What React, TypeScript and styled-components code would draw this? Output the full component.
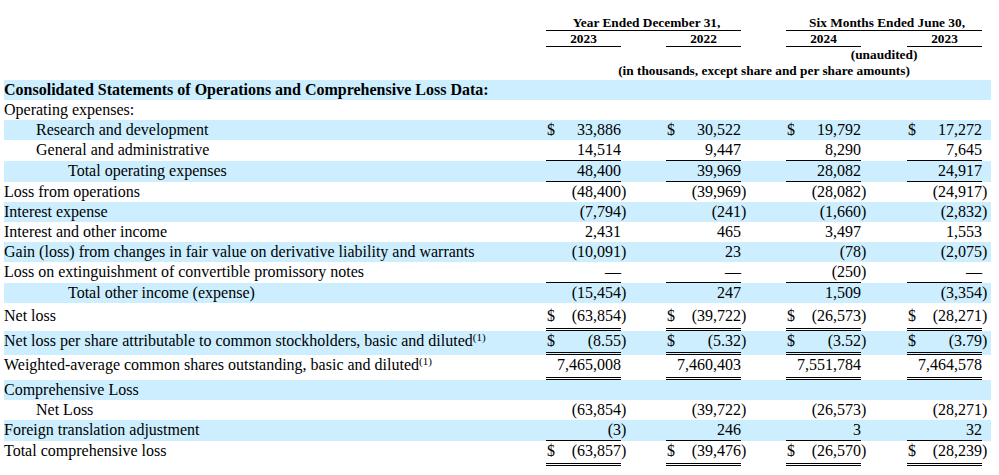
import React from 'react';
import styled, { createGlobalStyle } from 'styled-components';

const GlobalStyle = createGlobalStyle`
  html, body { margin: 0; padding: 0; background: #ffffff; }
  body { font-family: "Liberation Serif", "Times New Roman", serif; color: #000000; }
`;

const Page = styled.div`
  padding: 15px 0 0 4px;
`;

const Table = styled.table`
  border-collapse: separate;
  border-spacing: 0;
  table-layout: fixed;
  width: 987px;
  font-family: "Liberation Serif", "Times New Roman", serif;
  color: #000;
`;

const Col = styled.col<{ $w: number }>`
  width: ${(p) => p.$w}px;
`;

const HeadCell = styled.td<{ $rule?: boolean; $shift?: boolean; $lh?: number; $pb?: number }>`
  font-size: 13.33px;
  font-weight: bold;
  line-height: ${(p) => p.$lh ?? 15}px;
  text-align: center;
  white-space: nowrap;
  vertical-align: top;
  padding: 0 0 ${(p) => p.$pb ?? 0}px ${(p) => (p.$shift ? 6 : 0)}px;
  border-bottom: ${(p) => (p.$rule ? '1px solid #000' : 'none')};
`;

const BodyRow = styled.tr<{ $shaded: boolean }>`
  background: ${(p) => (p.$shaded ? '#cceeff' : 'transparent')};
`;

type Rule = 'single' | 'double' | undefined;

const Cell = styled.td<{ $pt: number; $pb: number; $rule?: Rule }>`
  font-size: 16px;
  line-height: 20px;
  vertical-align: top;
  white-space: nowrap;
  padding: ${(p) => p.$pt}px 0 ${(p) => p.$pb}px 0;
  border-bottom: ${(p) =>
    p.$rule === 'double' ? '3px double #000' : p.$rule === 'single' ? '1px solid #000' : 'none'};
`;

const LabelCell = styled(Cell)<{ $indent: number; $bold?: boolean }>`
  padding-left: ${(p) => p.$indent * 32}px;
  font-weight: ${(p) => (p.$bold ? 'bold' : 'normal')};
  overflow: visible;
`;

const DollarCell = styled(Cell)`
  text-align: left;
  padding-left: 1px;
`;

const NumCell = styled(Cell)`
  text-align: right;
`;

const ParenCell = styled(Cell)`
  text-align: left;
`;

const Note = styled.span`
  font-size: 11px;
  line-height: 1;
  vertical-align: text-top;
`;

type RowData = {
  label: string;
  indent?: number;
  bold?: boolean;
  note?: string;
  dollar?: boolean;
  values?: string[];
  rule?: Rule;
  pt?: number;
  pb?: number;
};

const rows: RowData[] = [
  { label: 'Consolidated Statements of Operations and Comprehensive Loss Data:', bold: true },
  { label: 'Operating expenses:' },
  { label: 'Research and development', indent: 1, dollar: true, values: ['33,886', '30,522', '19,792', '17,272'] },
  { label: 'General and administrative', indent: 1, values: ['14,514', '9,447', '8,290', '7,645'], rule: 'single' },
  { label: 'Total operating expenses', indent: 2, values: ['48,400', '39,969', '28,082', '24,917'], rule: 'single' },
  { label: 'Loss from operations', values: ['(48,400)', '(39,969)', '(28,082)', '(24,917)'] },
  { label: 'Interest expense', values: ['(7,794)', '(241)', '(1,660)', '(2,832)'] },
  { label: 'Interest and other income', values: ['2,431', '465', '3,497', '1,553'] },
  {
    label: 'Gain (loss) from changes in fair value on derivative liability and warrants',
    values: ['(10,091)', '23', '(78)', '(2,075)'],
  },
  {
    label: 'Loss on extinguishment of convertible promissory notes',
    values: ['—', '—', '(250)', '—'],
    rule: 'single',
  },
  { label: 'Total other income (expense)', indent: 2, values: ['(15,454)', '247', '1,509', '(3,354)'] },
  {
    label: 'Net loss',
    dollar: true,
    values: ['(63,854)', '(39,722)', '(26,573)', '(28,271)'],
    rule: 'double',
    pt: 3,
    pb: 2,
  },
  {
    label: 'Net loss per share attributable to common stockholders, basic and diluted',
    note: '(1)',
    dollar: true,
    values: ['(8.55)', '(5.32)', '(3.52)', '(3.79)'],
    rule: 'double',
    pb: 1,
  },
  {
    label: 'Weighted-average common shares outstanding, basic and diluted',
    note: '(1)',
    values: ['7,465,008', '7,460,403', '7,551,784', '7,464,578'],
    rule: 'double',
    pb: 2,
  },
  { label: 'Comprehensive Loss' },
  { label: 'Net Loss', indent: 1, values: ['(63,854)', '(39,722)', '(26,573)', '(28,271)'] },
  { label: 'Foreign translation adjustment', values: ['(3)', '246', '3', '32'], rule: 'single' },
  {
    label: 'Total comprehensive loss',
    dollar: true,
    values: ['(63,857)', '(39,476)', '(26,570)', '(28,239)'],
    rule: 'double',
    pb: 2,
  },
];

const spacers = [39, 39, 40, 3];

function splitValue(v: string): [string, string] {
  if (v.startsWith('(') && v.endsWith(')')) return [v.slice(0, -1), ')'];
  return [v, ''];
}

export default function App() {
  return (
    <>
      <GlobalStyle />
      <Page>
        <Table>
          <colgroup>
            <Col $w={542} />
            {spacers.map((s, i) => (
              <React.Fragment key={i}>
                <Col $w={10} />
                <Col $w={65} />
                <Col $w={6} />
                <Col $w={s} />
              </React.Fragment>
            ))}
          </colgroup>
          <thead>
            <tr>
              <HeadCell />
              <HeadCell colSpan={6} $rule $shift>
                Year Ended December 31,
              </HeadCell>
              <HeadCell />
              <HeadCell />
              <HeadCell colSpan={6} $rule $shift>
                Six Months Ended June 30,
              </HeadCell>
              <HeadCell />
              <HeadCell />
            </tr>
            <tr>
              <HeadCell />
              {['2023', '2022', '2024', '2023'].map((y, i) => (
                <React.Fragment key={i}>
                  <HeadCell colSpan={2} $rule>
                    {y}
                  </HeadCell>
                  <HeadCell />
                  <HeadCell />
                </React.Fragment>
              ))}
            </tr>
            <tr>
              <HeadCell $lh={16} />
              <HeadCell colSpan={8} $lh={16} />
              <HeadCell colSpan={6} $lh={16}>
                (unaudited)
              </HeadCell>
              <HeadCell $lh={16} />
              <HeadCell $lh={16} />
            </tr>
            <tr>
              <HeadCell $lh={16} $pb={1} />
              <HeadCell colSpan={14} $lh={16} $pb={1}>
                (in thousands, except share and per share amounts)
              </HeadCell>
              <HeadCell $lh={16} $pb={1} />
              <HeadCell $lh={16} $pb={1} />
            </tr>
          </thead>
          <tbody>
            {rows.map((r, idx) => {
              const pt = r.pt ?? 0;
              const pb = r.pb ?? 0;
              return (
                <BodyRow key={idx} $shaded={idx % 2 === 0}>
                  <LabelCell $pt={pt} $pb={pb} $indent={r.indent ?? 0} $bold={r.bold}>
                    {r.label}
                    {r.note && <Note>{r.note}</Note>}
                  </LabelCell>
                  {spacers.map((_, i) => {
                    const v = r.values ? r.values[i] : '';
                    const [num, paren] = splitValue(v);
                    return (
                      <React.Fragment key={i}>
                        <DollarCell $pt={pt} $pb={pb} $rule={r.values ? r.rule : undefined}>
                          {r.dollar ? '$' : ''}
                        </DollarCell>
                        <NumCell $pt={pt} $pb={pb} $rule={r.values ? r.rule : undefined}>
                          {num}
                        </NumCell>
                        <ParenCell $pt={pt} $pb={pb}>
                          {paren}
                        </ParenCell>
                        <Cell $pt={pt} $pb={pb} />
                      </React.Fragment>
                    );
                  })}
                </BodyRow>
              );
            })}
          </tbody>
        </Table>
      </Page>
    </>
  );
}
